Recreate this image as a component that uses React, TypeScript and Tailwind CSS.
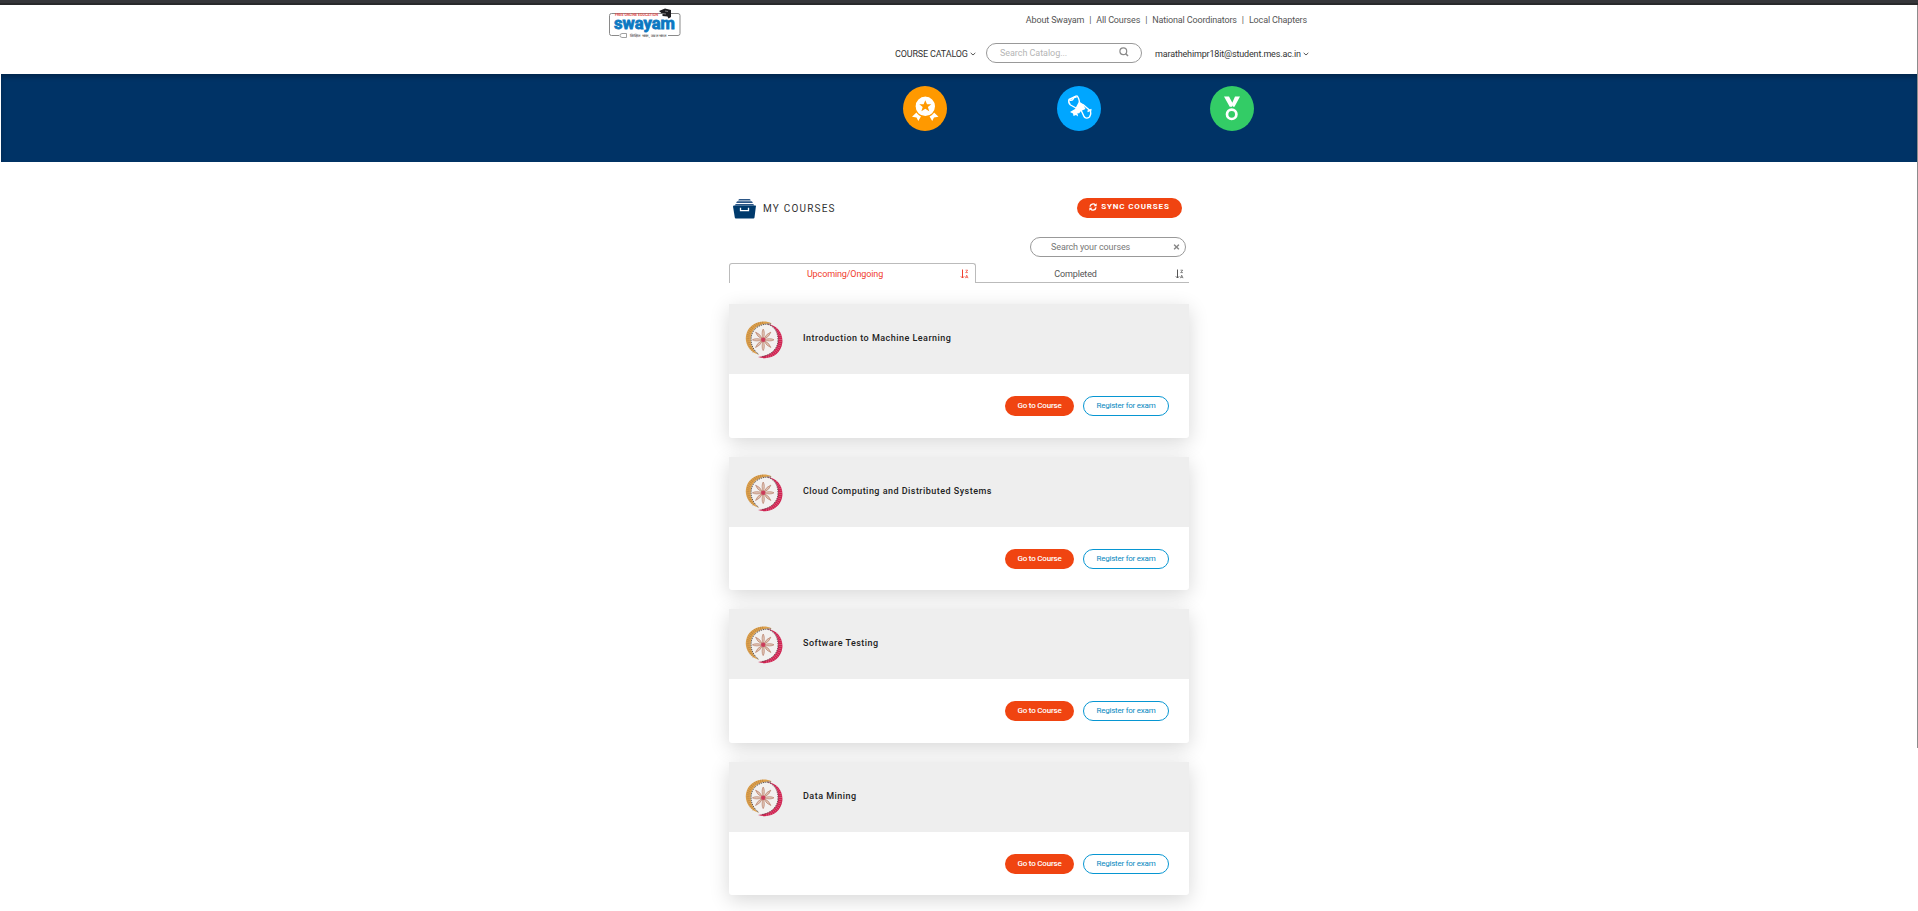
import React from "react";
import { FaTimes } from "react-icons/fa";

const courses = [
  { title: "Introduction to Machine Learning", footer: "h-[64px]" },
  { title: "Cloud Computing and Distributed Systems", footer: "h-[63px]" },
  { title: "Software Testing", footer: "h-[64px]" },
  { title: "Data Mining", footer: "h-[63px]" },
];

function SwayamLogo() {
  return (
    <svg className="block h-[32px] w-[74px]" viewBox="0 0 74 32" fontFamily="Roboto, sans-serif">
      <path d="M11 27.500H3.500Q1.500 27.500 1.500 25.500V7.500Q1.500 5.500 3.500 5.500H70Q72 5.500 72 7.500V25.500Q72 27.500 70 27.500H60" fill="none" stroke="#8a8a8a" strokeWidth="1" />
      <text x="7" y="8.300" fontSize="4" fontWeight="700" fill="#e05050" textLength="43" lengthAdjust="spacingAndGlyphs">FREE ONLINE EDUCATION</text>
      <text x="6" y="20.800" fontSize="16.500" fontWeight="700" fill="#0b78c2" stroke="#0b78c2" strokeWidth=".8" textLength="61" lengthAdjust="spacingAndGlyphs">swayam</text>
      <path d="M51 3l6-2.500 6 1.500v7l-2.500 1.500-1-2-5-.5V6z" fill="#1d1d20" />
      <path d="M54 5.500l4 .5M57 3l3 .5" stroke="#aaa" strokeWidth=".7" />
      <path d="M14 25.500h4.500v4H14l-2-1v-2z" fill="#fff" stroke="#888" strokeWidth=".8" />
      <text x="22" y="28.900" fontSize="3.500" fontWeight="700" fill="#777" textLength="36" lengthAdjust="spacingAndGlyphs">शिक्षित भारत, उन्नत भारत</text>
    </svg>
  );
}

function Chevron() {
  return (
    <svg className="mt-px h-[4px] w-[6px] shrink-0" viewBox="0 0 6 4">
      <path d="M.7.900L3 3 5.300.900" fill="none" stroke="#444" strokeWidth=".9" />
    </svg>
  );
}

function SearchIcon() {
  return (
    <svg className="mb-[3px] h-[10px] w-[10px]" viewBox="0 0 10 10" fill="none" stroke="#8a8a8a">
      <circle cx="4.300" cy="4.200" r="3.400" strokeWidth="1.200" />
      <path d="M6.800 6.700L9 9" strokeWidth="1.500" />
    </svg>
  );
}

function BadgeIcon() {
  return (
    <svg className="h-[45px] w-[44px]" viewBox="0 0 44 45">
      <ellipse cx="22" cy="22.500" rx="22" ry="22.500" fill="#ff9900" />
      <path d="M14.500 25.500l4 4-3.200 5.500-1.800-3.400-4.500-.8zM30 25.500l-4 4 3.200 5.500 1.800-3.400 4.500-.8z" fill="#fff" />
      <circle cx="22.300" cy="20.300" r="10.300" fill="#fff" stroke="#ff9900" strokeWidth="1.200" />
      <path d="M22.300 14.300l1.700 4h4.300l-3.400 2.700 1.300 4.200-3.900-2.500-3.900 2.500 1.300-4.200-3.400-2.700h4.300z" fill="#ff9900" />
    </svg>
  );
}

function DiplomaIcon() {
  return (
    <svg className="h-[45px] w-[44px]" viewBox="0 0 44 45">
      <ellipse cx="22" cy="22.500" rx="22" ry="22.500" fill="#00a6ff" />
      <g fill="none" stroke="#fff" strokeWidth="1.400" strokeLinejoin="round">
        <path d="M19.500 10L12 13.500Q11 17 13.500 19L19 22" />
        <path d="M19.500 9.500Q22 11.500 22.500 16.500" />
        <path d="M12.500 14q3 1 4-1.500t3-1" />
        <path d="M24 24L27 30.500Q29 33.500 32.500 31Q34.500 28 33.500 25L26 18.500" />
        <path d="M34.500 23.500L30.500 25.500" />
      </g>
      <path d="M22 15.500l4 2.500 2.500 5-4.500 2-2 2.500-1.500-.5.500 3.500-2-1.500-2.500 1-.5-2.500-3-1.500 5-3z" fill="#fff" />
    </svg>
  );
}

function MedalIcon() {
  return (
    <svg className="h-[45px] w-[44px]" viewBox="0 0 44 45">
      <ellipse cx="22" cy="22.500" rx="22" ry="22.500" fill="#33cc66" />
      <path d="M14 10.500h5l4.300 8-1.300 2.300h-2.300zM25 10.500h5l-5.500 10.300h-1.500l-.700-4z" fill="#fff" />
      <circle cx="21.700" cy="28.300" r="4.700" fill="none" stroke="#fff" strokeWidth="2.700" />
    </svg>
  );
}

function CoursesIcon() {
  return (
    <svg className="h-[20px] w-[23px]" viewBox="0 0 23 20">
      <path d="M6.500 0h10q1 0 1.300 1.500H5.200Q5.500 0 6.500 0zM4.500 2.300h14q1 0 1.300 1.800H3.200q.3-1.800 1.300-1.800zM3 4.900h17q.9 0 1.200 1.700H1.800Q2.100 4.900 3 4.900z" fill="#2b5686" />
      <path d="M1 6.500h21.500q.5 0 .4 1L21.500 18.500q-.2 1-1 1H2.800q-.8 0-1-1L0 7.500q0-1 1-1z" fill="#003a6c" />
      <path d="M7.500 8.800v2.900h8V8.800" fill="none" stroke="#fff" strokeWidth="1.300" />
    </svg>
  );
}

function SyncIcon() {
  return (
    <svg className="h-[8px] w-[8px]" viewBox="0 0 512 512" fill="none" stroke="#fff" strokeWidth="85">
      <path d="M65 230A195 195 0 0 1 410 130M447 282A195 195 0 0 1 102 382" />
      <path d="M490 20v195H295zM22 492V297h195z" fill="#fff" stroke="none" />
    </svg>
  );
}

function SortIcon({ color }: { color: string }) {
  return (
    <svg className="h-[10px] w-[9px]" viewBox="0 0 9 10" fill="none" stroke={color}>
      <path d="M2.500 .5v8.500M.9 7.400L2.500 9l1.600-1.600" strokeWidth="1" />
      <path d="M5.500 1.200h2.200L5.700 3.600h2.200M5.400 9.200l1.300-3L8 9.200M5.900 8.300h1.600" strokeWidth=".7" />
    </svg>
  );
}

function Emblem() {
  const petals = [0, 45, 90, 135, 180, 225, 270, 315];
  return (
    <svg className="mt-px h-[38px] w-[38px] shrink-0" viewBox="0 0 38 38">
      <circle cx="18.500" cy="18.800" r="16" fill="#f3f1f0" />
      <path d="M27 2.500C18-2 6 1.500 2 11C-2 21 4 31 14 34C7 29 4 21 6.500 13C9 6 16 2 27 2.500z" fill="#dda04c" />
      <path d="M18 1.800C9 2.500 3.500 9 3 16C2.800 22 5 28 9 31" fill="none" stroke="#8a6030" strokeWidth="2.800" strokeDasharray=".6 1.400" opacity=".45" />
      <path d="M26 3C16 2.500 9 6.500 6.800 13.500C4.500 21 7.500 29 14 33.500" fill="none" stroke="#4d4544" strokeWidth=".9" strokeDasharray="1.400 .8" />
      <path d="M22 3C30 5 34 12 33 21C32 29 25 35 13 36C25 40 36 33 37.300 22C38.500 12 32 4 22 3z" fill="#cf2351" />
      <path d="M31 7.500C35 12 36 17 35.200 22C34 29 28 34.500 21 36" fill="none" stroke="#f7c9d6" strokeWidth="3" strokeDasharray=".5 1.500" opacity=".45" />
      <path d="M22.500 3.300C30 5.500 33.500 12 32.800 21C32 28 26 34 17 35.500" fill="none" stroke="#5e4048" strokeWidth=".8" strokeDasharray="1.400 .9" />
      <g fill="#e2c8b8" stroke="#b8806c" strokeWidth=".7">
        {petals.map((a) => (
          <path key={a} d="M18.200 18.800Q16 11.500 18.200 8Q20.400 11.500 18.200 18.800z" transform={`rotate(${a} 18.200 18.800)`} />
        ))}
      </g>
      <circle cx="18.200" cy="18.800" r="2.200" fill="#cf2351" opacity=".75" />
    </svg>
  );
}

function CourseCard({ title, footer }: { title: string; footer: string }) {
  return (
    <article className="shrink-0 rounded-[3px] bg-white shadow-[0_5px_20px_rgba(0,0,0,0.16)]">
      <div className="flex h-[70px] items-center bg-[#eeeeee] pl-[16px]">
        <Emblem />
        <h2 className="mb-[3px] ml-[20px] text-[9px] leading-[12px] font-medium tracking-[0.47px] text-[#222]">{title}</h2>
      </div>
      <div className={`flex items-start justify-end gap-[9px] pt-[22px] pr-[20px] ${footer}`}>
        <button className="h-[20px] w-[69px] rounded-full bg-[#f04411] text-[8px] leading-[18px] font-medium tracking-[-0.2px] text-white">Go to Course</button>
        <button className="h-[20px] w-[86px] rounded-full border border-[#0796d2] text-[8px] leading-[16px] tracking-[-0.23px] text-[#0888c0]">Register for exam</button>
      </div>
    </article>
  );
}

export default function App() {
  return (
    <div className="relative flex h-[911px] w-full flex-col overflow-hidden bg-white font-[Roboto,sans-serif]">
      <div className="h-[5px] shrink-0 border-b-2 border-[#28292b] bg-[#35363a]" />
      <header className="flex h-[69px] shrink-0 pl-[608px]">
        <div className="pt-[3px]">
          <SwayamLogo />
        </div>
        <div className="ml-[213px] flex w-[415px] flex-col">
          <nav className="mt-[9px] flex h-[12px] items-center justify-end gap-[5px] pr-[3px] text-[9px] leading-[12px] tracking-[-0.15px] text-[#555]">
            <a>About Swayam</a>
            <span>|</span>
            <a>All Courses</a>
            <span>|</span>
            <a>National Coordinators</a>
            <span>|</span>
            <a>Local Chapters</a>
          </nav>
          <div className="mt-[17px] flex h-[20px] items-center text-[9px] leading-[12px] tracking-[-0.16px] text-[#333]">
            <span className="w-[75px] pt-[2px] whitespace-nowrap">COURSE CATALOG</span>
            <Chevron />
            <div className="ml-[10px] flex h-[20px] w-[156px] items-center justify-between rounded-full border border-[#999] pr-[12px] pl-[13px] tracking-[-0.05px] text-[#b5b5b5]">
              <span>Search Catalog...</span>
              <SearchIcon />
            </div>
            <span className="ml-[13px] w-[148px] pt-[2px] whitespace-nowrap">marathehimpr18it@student.mes.ac.in</span>
            <Chevron />
          </div>
        </div>
      </header>
      <section className="ml-px flex h-[88px] shrink-0 gap-[109px] bg-[#003366] pt-[12px] pl-[902px] shadow-[inset_0_3px_4px_rgba(0,0,0,0.25)]">
        <BadgeIcon />
        <div className="pl-px">
          <DiplomaIcon />
        </div>
        <MedalIcon />
      </section>
      <main className="ml-[729px] w-[460px]">
        <div className="mt-[36px] flex h-[20px] items-center pr-[7px] pl-[4px]">
          <div className="mt-[2px]">
            <CoursesIcon />
          </div>
          <h1 className="mt-[2px] ml-[7px] text-[10px] leading-[14px] tracking-[1.2px] text-[#333]">MY COURSES</h1>
          <button className="ml-auto flex h-[20px] w-[105px] items-center justify-center gap-[4px] rounded-full bg-[#f04411] pb-[2px] text-[8px] font-bold tracking-[0.86px] text-white">
            <SyncIcon />
            SYNC COURSES
          </button>
        </div>
        <div className="mt-[19px] mr-[3px] ml-auto flex h-[20px] w-[156px] items-center justify-between rounded-full border border-[#999] pr-[5px] pl-[20px] text-[9px] tracking-[-0.12px] text-[#777]">
          <span className="pt-px">Search your courses</span>
          <FaTimes className="h-[8px] w-[7px] text-[#888]" />
        </div>
        <div className="mt-[6px] flex h-[20px] text-[9px] leading-[12px] tracking-[-0.12px]">
          <div className="flex h-[20px] w-[247px] items-center rounded-t-[3px] border border-b-0 border-[#bbb] pr-[6px] text-[#f0402f]">
            <span className="flex-1 pt-px text-center">Upcoming/Ongoing</span>
            <SortIcon color="#f0402f" />
          </div>
          <div className="flex h-[20px] w-[213px] items-center border-b border-[#bbb] pt-[2px] pr-[5px] text-[#555]">
            <span className="flex-1 text-center">Completed</span>
            <SortIcon color="#555" />
          </div>
        </div>
        <div className="mt-[21px] flex flex-col gap-[19px]">
          {courses.map((course) => (
            <CourseCard key={course.title} title={course.title} footer={course.footer} />
          ))}
        </div>
      </main>
      <div className="absolute top-[5px] right-0 h-[743px] w-px bg-[#8c8c8c]" />
    </div>
  );
}
